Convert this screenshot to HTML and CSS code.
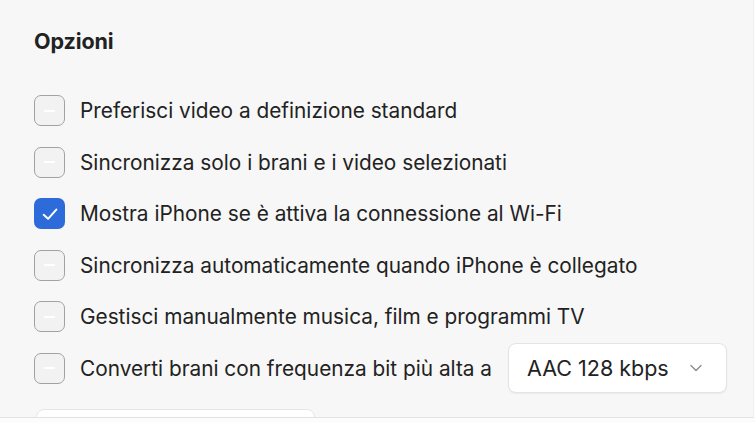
FILE: index.html
```html
<!DOCTYPE html>
<html lang="it">
<head>
<meta charset="utf-8">
<title>Opzioni</title>
<link rel="stylesheet" href="styles.css">
</head>
<body>
<section class="panel">
  <h2 class="title">Opzioni</h2>
  <ul class="options">
    <li class="option">
      <span class="check"></span>
      <span class="label">Preferisci video a definizione standard</span>
    </li>
    <li class="option">
      <span class="check"></span>
      <span class="label">Sincronizza solo i brani e i video selezionati</span>
    </li>
    <li class="option">
      <span class="check is-on">
        <svg viewBox="0 0 16 16" width="22" height="22"><path d="M3.4 8.6 L6.6 11.5 L12.6 4.8" fill="none" stroke="#fff" stroke-width="1.45" stroke-linecap="round" stroke-linejoin="round"/></svg>
      </span>
      <span class="label">Mostra iPhone se è attiva la connessione al Wi-Fi</span>
    </li>
    <li class="option">
      <span class="check"></span>
      <span class="label">Sincronizza automaticamente quando iPhone è collegato</span>
    </li>
    <li class="option">
      <span class="check"></span>
      <span class="label">Gestisci manualmente musica, film e programmi TV</span>
    </li>
    <li class="option">
      <span class="check"></span>
      <span class="label">Converti brani con frequenza bit più alta a</span>
      <span class="select">
        <span class="select-value">AAC 128 kbps</span>
        <svg class="chevron" viewBox="0 0 12 8" width="12" height="8"><path d="M1 1.5 L6 6.5 L11 1.5" fill="none" stroke="#8a8a8a" stroke-width="1.3" stroke-linecap="round" stroke-linejoin="round"/></svg>
      </span>
    </li>
  </ul>
  <div class="next-button"></div>
</section>
</body>
</html>
```

FILE: styles.css
```css
html, body {
  margin: 0;
  padding: 0;
}

body {
  width: 755px;
  height: 423px;
  overflow: hidden;
  background: #fcfcfc;
  font-family: Inter, "Noto Sans", sans-serif;
  color: #222222;
}

.panel {
  box-sizing: border-box;
  width: 754px;
  height: 418px;
  background: #f7f7f7;
  border-bottom: 1px solid #e2e2e2;
  border-right: 1px solid #f0f0f0;
  padding: 27px 0 0 34px;
  overflow: hidden;
  display: flex;
  flex-direction: column;
}

.title {
  margin: 0;
  font-size: 21.5px;
  font-weight: 700;
  line-height: 28px;
  letter-spacing: -0.1px;
}

.options {
  list-style: none;
  margin: 40px 0 0;
  padding: 0;
  display: flex;
  flex-direction: column;
  gap: 20.5px;
}

.option {
  display: flex;
  align-items: center;
  height: 31px;
  font-size: 20.8px;
}

.check {
  box-sizing: border-box;
  flex: none;
  width: 31px;
  height: 31px;
  margin-right: 15px;
  border: 1.5px solid #a2a2a2;
  border-radius: 7px;
  background: #f2f2f2;
  display: flex;
  align-items: center;
  justify-content: center;
}

/* faint dash drawn inside empty boxes */
.check::after {
  content: "";
  width: 11px;
  height: 2px;
  border-radius: 1px;
  background: #ffffff;
}

.check.is-on {
  border: none;
  background: #2c6bd9;
}

.check.is-on::after {
  display: none;
}

.select {
  box-sizing: border-box;
  flex: none;
  display: flex;
  align-items: center;
  justify-content: space-between;
  width: 219px;
  height: 50px;
  margin-left: 16px;
  padding: 0 24px 0 18px;
  background: #ffffff;
  border: 1px solid #e4e4e4;
  border-radius: 8px;
  box-shadow: 0 1px 2px rgba(0, 0, 0, 0.06);
  font-size: 21.5px;
}

.next-button {
  box-sizing: border-box;
  width: 279px;
  height: 20px;
  margin-top: auto;
  margin-bottom: -12px;
  margin-left: 2px;
  background: #ffffff;
  border: 1px solid #e6e6e6;
  border-radius: 8px;
}
```
